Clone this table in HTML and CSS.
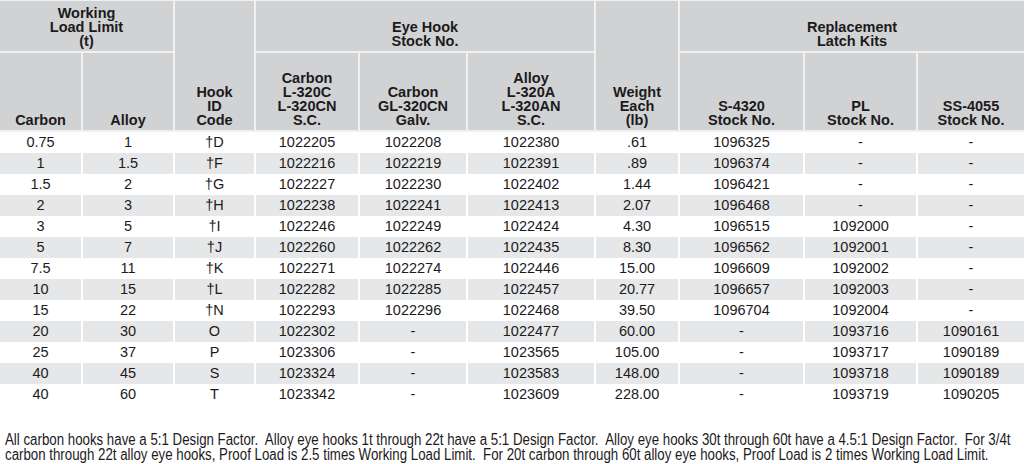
FILE: index.html
```html
<!DOCTYPE html>
<html lang="en">
<head>
<meta charset="utf-8">
<title>Eye Hook Specifications</title>
<link rel="stylesheet" href="styles.css">
</head>
<body>
<table class="spec">
  <colgroup>
    <col class="c1"><col class="c2"><col class="c3"><col class="c4"><col class="c5">
    <col class="c6"><col class="c7"><col class="c8"><col class="c9"><col class="c10">
  </colgroup>
  <thead>
    <tr class="group">
      <th colspan="2">Working<br>Load Limit<br>(t)</th>
      <th rowspan="2">Hook<br>ID<br>Code</th>
      <th colspan="3">Eye Hook<br>Stock No.</th>
      <th rowspan="2">Weight<br>Each<br>(lb)</th>
      <th colspan="3">Replacement<br>Latch Kits</th>
    </tr>
    <tr class="sub">
      <th>Carbon</th>
      <th>Alloy</th>
      <th>Carbon<br>L-320C<br>L-320CN<br>S.C.</th>
      <th>Carbon<br>GL-320CN<br>Galv.</th>
      <th>Alloy<br>L-320A<br>L-320AN<br>S.C.</th>
      <th>S-4320<br>Stock No.</th>
      <th>PL<br>Stock No.</th>
      <th>SS-4055<br>Stock No.</th>
    </tr>
  </thead>
  <tbody>
    <tr><td>0.75</td><td>1</td><td>†D</td><td>1022205</td><td>1022208</td><td>1022380</td><td>.61</td><td>1096325</td><td>-</td><td>-</td></tr>
    <tr><td>1</td><td>1.5</td><td>†F</td><td>1022216</td><td>1022219</td><td>1022391</td><td>.89</td><td>1096374</td><td>-</td><td>-</td></tr>
    <tr><td>1.5</td><td>2</td><td>†G</td><td>1022227</td><td>1022230</td><td>1022402</td><td>1.44</td><td>1096421</td><td>-</td><td>-</td></tr>
    <tr><td>2</td><td>3</td><td>†H</td><td>1022238</td><td>1022241</td><td>1022413</td><td>2.07</td><td>1096468</td><td>-</td><td>-</td></tr>
    <tr><td>3</td><td>5</td><td>†I</td><td>1022246</td><td>1022249</td><td>1022424</td><td>4.30</td><td>1096515</td><td>1092000</td><td>-</td></tr>
    <tr><td>5</td><td>7</td><td>†J</td><td>1022260</td><td>1022262</td><td>1022435</td><td>8.30</td><td>1096562</td><td>1092001</td><td>-</td></tr>
    <tr><td>7.5</td><td>11</td><td>†K</td><td>1022271</td><td>1022274</td><td>1022446</td><td>15.00</td><td>1096609</td><td>1092002</td><td>-</td></tr>
    <tr><td>10</td><td>15</td><td>†L</td><td>1022282</td><td>1022285</td><td>1022457</td><td>20.77</td><td>1096657</td><td>1092003</td><td>-</td></tr>
    <tr><td>15</td><td>22</td><td>†N</td><td>1022293</td><td>1022296</td><td>1022468</td><td>39.50</td><td>1096704</td><td>1092004</td><td>-</td></tr>
    <tr><td>20</td><td>30</td><td>O</td><td>1022302</td><td>-</td><td>1022477</td><td>60.00</td><td>-</td><td>1093716</td><td>1090161</td></tr>
    <tr><td>25</td><td>37</td><td>P</td><td>1023306</td><td>-</td><td>1023565</td><td>105.00</td><td>-</td><td>1093717</td><td>1090189</td></tr>
    <tr><td>40</td><td>45</td><td>S</td><td>1023324</td><td>-</td><td>1023583</td><td>148.00</td><td>-</td><td>1093718</td><td>1090189</td></tr>
    <tr><td>40</td><td>60</td><td>T</td><td>1023342</td><td>-</td><td>1023609</td><td>228.00</td><td>-</td><td>1093719</td><td>1090205</td></tr>
  </tbody>
</table>
<div class="note-wrap">
  <p class="note">All carbon hooks have a 5:1 Design Factor.&nbsp; Alloy eye hooks 1t through 22t have a 5:1 Design Factor.&nbsp; Alloy eye hooks 30t through 60t have a 4.5:1 Design Factor.&nbsp; For 3/4t<br>carbon through 22t alloy eye hooks, Proof Load is 2.5 times Working Load Limit.&nbsp; For 20t carbon through 60t alloy eye hooks, Proof Load is 2 times Working Load Limit.</p>
</div>
</body>
</html>
```

FILE: styles.css
```css
html, body {
  margin: 0;
  padding: 0;
  background: #ffffff;
}

body {
  font-family: "Liberation Sans", Arial, sans-serif;
  color: #1c1a1b;
}

.spec {
  width: 1024px;
  table-layout: fixed;
  border-collapse: collapse;
}

.c1 { width: 82px; }
.c2 { width: 92px; }
.c3 { width: 81px; }
.c4 { width: 104px; }
.c5 { width: 108px; }
.c6 { width: 128px; }
.c7 { width: 84px; }
.c8 { width: 125px; }
.c9 { width: 113px; }
.c10 { width: 107px; }

.spec th {
  background: #d1d2d4;
  font-weight: bold;
  font-size: 14.5px;
  line-height: 14px;
  text-align: center;
  vertical-align: bottom;
  padding: 0 2px 3px;
  border: 2px solid #f1f1f2;
}

.spec thead tr:first-child th {
  border-top: 1px solid #f1f1f2;
}

.spec th:first-child { border-left: none; }
.spec th:last-child { border-right: none; }

.spec .group { height: 51px; }
.spec .sub { height: 79px; }

.spec td {
  font-size: 14.5px;
  line-height: 21px;
  height: 21px;
  padding: 0;
  text-align: center;
  border-left: 2px solid #ffffff;
  border-right: 2px solid #ffffff;
}

.spec td:first-child { border-left: none; }
.spec td:last-child { border-right: none; }

.spec tbody tr:nth-child(even) td {
  background: #e6e7e8;
}

.note-wrap {
  width: 1025px;
  overflow: hidden;
  margin-top: 27px;
  padding-bottom: 4px;
}

.note {
  margin: 0 0 0 5px;
  font-family: "Liberation Sans", Arial, sans-serif;
  font-size: 16px;
  line-height: 15px;
  white-space: nowrap;
  width: max-content;
  transform: scaleX(0.83);
  transform-origin: left top;
}
```
